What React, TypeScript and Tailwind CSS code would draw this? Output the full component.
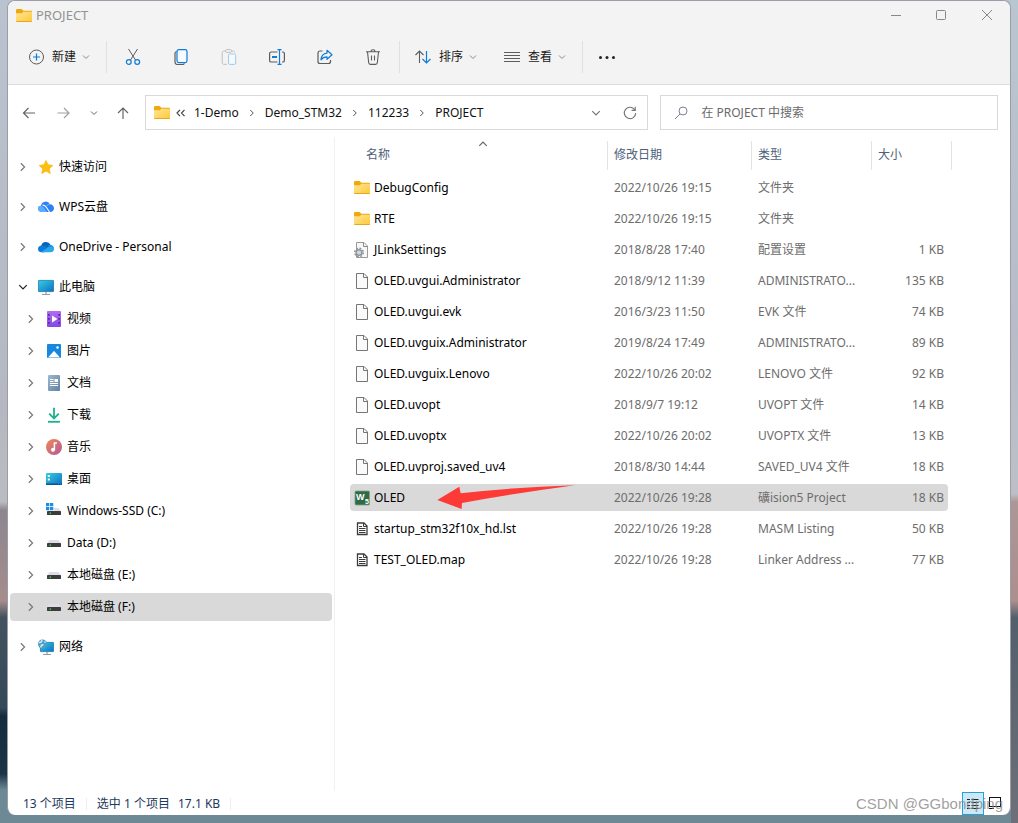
import type { ReactNode } from 'react'

type FileKind = 'folder' | 'settings' | 'blank' | 'keil' | 'text'

interface FileRow {
  name: string
  date: string
  type: string
  size: string
  kind: FileKind
}

const files: FileRow[] = [
  { name: 'DebugConfig', date: '2022/10/26 19:15', type: '文件夹', size: '', kind: 'folder' },
  { name: 'RTE', date: '2022/10/26 19:15', type: '文件夹', size: '', kind: 'folder' },
  { name: 'JLinkSettings', date: '2018/8/28 17:40', type: '配置设置', size: '1 KB', kind: 'settings' },
  { name: 'OLED.uvgui.Administrator', date: '2018/9/12 11:39', type: 'ADMINISTRATO...', size: '135 KB', kind: 'blank' },
  { name: 'OLED.uvgui.evk', date: '2016/3/23 11:50', type: 'EVK 文件', size: '74 KB', kind: 'blank' },
  { name: 'OLED.uvguix.Administrator', date: '2019/8/24 17:49', type: 'ADMINISTRATO...', size: '89 KB', kind: 'blank' },
  { name: 'OLED.uvguix.Lenovo', date: '2022/10/26 20:02', type: 'LENOVO 文件', size: '92 KB', kind: 'blank' },
  { name: 'OLED.uvopt', date: '2018/9/7 19:12', type: 'UVOPT 文件', size: '14 KB', kind: 'blank' },
  { name: 'OLED.uvoptx', date: '2022/10/26 20:02', type: 'UVOPTX 文件', size: '13 KB', kind: 'blank' },
  { name: 'OLED.uvproj.saved_uv4', date: '2018/8/30 14:44', type: 'SAVED_UV4 文件', size: '18 KB', kind: 'blank' },
  { name: 'OLED', date: '2022/10/26 19:28', type: '礦ision5 Project', size: '18 KB', kind: 'keil' },
  { name: 'startup_stm32f10x_hd.lst', date: '2022/10/26 19:28', type: 'MASM Listing', size: '50 KB', kind: 'text' },
  { name: 'TEST_OLED.map', date: '2022/10/26 19:28', type: 'Linker Address ...', size: '77 KB', kind: 'text' },
]

const selectedFile = 'OLED'

function Svg({ children, size = 16, className = '' }: { children: ReactNode; size?: number; className?: string }) {
  return (
    <svg width={size} height={size} viewBox="0 0 16 16" fill="none" className={`shrink-0 ${className}`} aria-hidden="true">
      {children}
    </svg>
  )
}

function FolderIcon() {
  return (
    <Svg>
      <defs>
        <linearGradient id="folder" x1="0" y1="0" x2="1" y2="1">
          <stop offset="0" stopColor="#ffe59a" />
          <stop offset="1" stopColor="#fdc935" />
        </linearGradient>
      </defs>
      <path d="M0 2.500c0-.8.5-1.400 1.300-1.400h4.200l2 1.700h7.200c.8 0 1.300.5 1.300 1.200v3H0z" fill="#f0a90c" />
      <path d="M0 5.200h5.800l1.500-1.400h8.200c.3 0 .5.2.5.5v8.500c0 .7-.5 1.200-1.200 1.200H1.200C.5 14 0 13.500 0 12.800z" fill="url(#folder)" />
      <path d="M.3 13.500h15.400" stroke="#e9a520" />
    </Svg>
  )
}

function BlankFileIcon() {
  return (
    <Svg>
      <path d="M2.500.5h7.500l3.500 3.500v11.500h-11z" fill="#fafafb" stroke="#767676" />
      <path d="M9.500.5v4h4" stroke="#767676" />
    </Svg>
  )
}

function SettingsFileIcon() {
  return (
    <Svg>
      <path d="M2.500.5h7.500l3.500 3.500v11.500h-11z" fill="#f7f7f7" stroke="#9a9a9a" />
      <path d="M9.500.5v4h4" stroke="#8a8a8a" />
      <circle cx="5" cy="10.500" r="4.200" stroke="#8d949b" strokeWidth="1.600" strokeDasharray="1.800 1.500" />
      <circle cx="5" cy="10.500" r="2.800" fill="#e4e9ed" stroke="#8d949b" strokeWidth="1.500" />
      <circle cx="5" cy="10.500" r="1" fill="#fff" stroke="#a4abb2" strokeWidth=".6" />
    </Svg>
  )
}

function TextFileIcon() {
  return (
    <Svg>
      <path d="M3.500 2h6.500l3 3v8.500H3.500z" fill="#fff" stroke="#3c3c3c" strokeWidth="1.300" />
      <path d="M9.500 2v3.500H13" stroke="#3c3c3c" />
      <path d="M5 5.500h3M5 7.500h6.500M5 9.500h6.500M5 11.500h6.500" stroke="#3c3c3c" />
    </Svg>
  )
}

function KeilIcon() {
  return (
    <Svg>
      <rect x="1" y="1" width="14.500" height="14" rx="1" fill="#2f6b45" stroke="#7fa18b" strokeWidth=".8" />
      <text x="2" y="10" fontSize="9" fontWeight="700" fill="#fff" fontFamily="Liberation Sans, sans-serif">W</text>
      <text x="11" y="14" fontSize="7" fontWeight="700" fill="#fff" fontFamily="Liberation Sans, sans-serif">5</text>
    </Svg>
  )
}

const fileIcons: Record<FileKind, ReactNode> = {
  folder: <FolderIcon />,
  settings: <SettingsFileIcon />,
  blank: <BlankFileIcon />,
  keil: <KeilIcon />,
  text: <TextFileIcon />,
}

function StarIcon() {
  return (
    <Svg>
      <path d="M8 1.500l2 4.300 4.800.6-3.500 3.300.9 4.800L8 12.100l-4.200 2.400.9-4.800L1.200 6.400 6 5.800z" fill="#fdc010" stroke="#fbb80e" strokeWidth=".8" strokeLinejoin="round" />
    </Svg>
  )
}

function WpsCloudIcon() {
  return (
    <Svg>
      <path d="M3 6.800A4.800 4.800 0 0 1 12 5.200 4 4 0 0 1 16 9.300C16 11.700 14.500 13 12 13H4C1.500 13 0 11.600 0 9.700 0 8 1.200 6.900 3 6.800z" fill="#2f80f6" />
      <path d="M3 6.800C1.200 6.900 0 8 0 9.700 0 11.600 1.500 13 4 13h5L5.500 8z" fill="#59adff" />
      <path d="M4.500 6.200c2-.3 3 .8 4 2.300l3 4.500" stroke="#fff" strokeWidth="1.100" />
      <path d="M8.500 7c1-1.500 2.200-1.900 3.500-1.800" stroke="#8cc5ff" strokeWidth=".8" />
    </Svg>
  )
}

function OneDriveIcon() {
  return (
    <Svg>
      <path d="M3.200 6.800a5 5 0 0 1 9.300-1L15 9 6 11z" fill="#0a64bd" />
      <path d="M3.500 6.500C1.500 6.600 0 8 0 10c0 2 1.500 3.300 3.400 3.300h3L11 8.500 6.300 7z" fill="#0e7bd6" />
      <path d="M9.500 7.200c.7-.9 1.600-1.300 2.800-1.300C14.500 5.900 16 7.600 16 9.600z" fill="#1590e2" />
      <path d="M3 13.300h9.600c2 0 3.400-1.300 3.400-3.300 0-1-.5-1.600-1-2.200L10.500 8z" fill="#29a9ec" />
    </Svg>
  )
}

function Monitor({ x = 0, y = 1, w = 16, h = 12 }: { x?: number; y?: number; w?: number; h?: number }) {
  return (
    <>
      <defs>
        <linearGradient id="screen" x1="0" y1="0" x2="1" y2="1">
          <stop offset="0" stopColor="#35cfe0" />
          <stop offset="1" stopColor="#0f6fc4" />
        </linearGradient>
      </defs>
      <rect x={x + 0.4} y={y + 0.4} width={w - 0.8} height={h - 0.8} rx=".6" fill="url(#screen)" stroke="#1576ae" strokeWidth=".8" />
      <path d={`M${x + w / 2} ${y + h}v2.500M${x + w / 2 - 4} ${y + h + 2.5}h8`} stroke="#8f9ba6" strokeWidth="1.200" />
    </>
  )
}

function NetworkIcon() {
  return (
    <Svg>
      <Monitor x={2} y={3} w={14} h={10} />
      <circle cx="4.500" cy="5" r="4.500" fill="#4d9ecb" />
      <path d="M1 3.500c1.500.3 2.600-.3 3-2.500M3 8.500c-.3-1.800.8-3 2.500-2.500" stroke="#d3ecf6" strokeWidth="1.500" />
      <path d="M6 2.500c.8.8 1.500.8 2.300.6" stroke="#a8d6ea" strokeWidth="1.200" />
    </Svg>
  )
}

function VideoIcon() {
  return (
    <Svg>
      <defs>
        <linearGradient id="video" x1="0" y1="0" x2="0" y2="1">
          <stop offset="0" stopColor="#b26bf0" />
          <stop offset="1" stopColor="#8548e6" />
        </linearGradient>
      </defs>
      <rect x="1" y="0" width="14" height="16" rx="1" fill="url(#video)" />
      <path d="M2.900 3v12M13.100 3v12" stroke="#4b2390" strokeWidth="1.500" strokeDasharray="1.700 2.300" />
      <path d="M6 4.500v7l5.500-3.500z" fill="#fff" />
    </Svg>
  )
}

function PictureIcon() {
  return (
    <Svg>
      <rect x="1" y="1" width="14" height="14" rx="1" fill="#1688df" />
      <path d="M2 14.500l5.200-5.800c.5-.5 1.100-.5 1.600 0l5.200 5.800z" fill="#fff" />
      <circle cx="11.500" cy="4.500" r="1.200" fill="#fff" />
    </Svg>
  )
}

function DocumentIcon() {
  return (
    <Svg>
      <defs>
        <linearGradient id="doc" x1="0" y1="0" x2="1" y2="1">
          <stop offset="0" stopColor="#9fb8cf" />
          <stop offset="1" stopColor="#5f82a5" />
        </linearGradient>
      </defs>
      <rect x="2" y="0" width="12" height="16" rx="1" fill="url(#doc)" />
      <path d="M4 4.500h3.500M4 6.500h3.500M4 8.500h8M4 10.500h8" stroke="#fff" />
      <rect x="8.500" y="4" width="3.500" height="3" fill="#fff" />
    </Svg>
  )
}

function DownloadIcon() {
  return (
    <Svg>
      <path d="M8 .8v10.500M3.200 6.700L8 11.500l4.800-4.800" stroke="#1cb08f" strokeWidth="1.800" />
      <path d="M2 14.800h12" stroke="#1cb08f" strokeWidth="1.800" />
    </Svg>
  )
}

function MusicIcon() {
  return (
    <Svg>
      <defs>
        <linearGradient id="music" x1="0" y1="0" x2="1" y2="1">
          <stop offset="0" stopColor="#f08a55" />
          <stop offset="1" stopColor="#b0589c" />
        </linearGradient>
      </defs>
      <circle cx="8" cy="8" r="8" fill="url(#music)" />
      <circle cx="7" cy="10.800" r="2" fill="#fff" />
      <path d="M8.400 11V4h2.500" stroke="#fff" strokeWidth="1.500" />
    </Svg>
  )
}

function DesktopIcon() {
  return (
    <Svg>
      <rect x="0" y="2" width="16" height="12" rx="1" fill="url(#screen)" />
      <path d="M2.800 4v2M2.800 7.500v2" stroke="#fff" strokeWidth="2" />
      <path d="M0 13.200h11" stroke="#0b4f86" strokeWidth="1.400" />
      <path d="M11 13.200h5" stroke="#0b4f86" strokeWidth="1.400" strokeDasharray="1 1" />
    </Svg>
  )
}

function DriveIcon({ system = false }: { system?: boolean }) {
  return (
    <Svg>
      <path d="M3.500 5h9L15 8.500H1z" fill="#dcdfe3" />
      <rect x="1" y="8" width="14" height="4" rx=".4" fill="#3c3c3c" />
      <rect x="3.500" y="9.500" width="1.500" height="1.300" fill="#3fe05a" />
      {system && (
        <>
          <rect x="0" y="0" width="8" height="8" fill="#fff" />
          <path d="M0 0h3.300v3.300H0zM4 0h3.300v3.300H4zM0 4h3.300v3.300H0zM4 4h3.300v3.300H4z" fill="#1a8fe3" />
        </>
      )}
    </Svg>
  )
}

function Chevron({ dir, size = 10, className = '' }: { dir: 'right' | 'down' | 'up'; size?: number; className?: string }) {
  const d = { right: 'M4.500 2l6 6-6 6', down: 'M2 5l6 6 6-6', up: 'M2 11l6-6 6 6' }[dir]
  return (
    <Svg size={size} className={className}>
      <path d={d} stroke="currentColor" strokeWidth="2" />
    </Svg>
  )
}

interface TreeNode {
  label: string
  icon: ReactNode
  children?: TreeNode[]
}

const tree: TreeNode[] = [
  { label: '快速访问', icon: <StarIcon /> },
  { label: 'WPS云盘', icon: <WpsCloudIcon /> },
  { label: 'OneDrive - Personal', icon: <OneDriveIcon /> },
  {
    label: '此电脑',
    icon: <Svg><Monitor /></Svg>,
    children: [
      { label: '视频', icon: <VideoIcon /> },
      { label: '图片', icon: <PictureIcon /> },
      { label: '文档', icon: <DocumentIcon /> },
      { label: '下载', icon: <DownloadIcon /> },
      { label: '音乐', icon: <MusicIcon /> },
      { label: '桌面', icon: <DesktopIcon /> },
      { label: 'Windows-SSD (C:)', icon: <DriveIcon system /> },
      { label: 'Data (D:)', icon: <DriveIcon /> },
      { label: '本地磁盘 (E:)', icon: <DriveIcon /> },
      { label: '本地磁盘 (F:)', icon: <DriveIcon /> },
    ],
  },
  { label: '网络', icon: <NetworkIcon /> },
]

function TreeItem({ node, nested = false }: { node: TreeNode; nested?: boolean }) {
  const selected = node.label === '本地磁盘 (F:)'
  return (
    <button
      type="button"
      className={`flex h-7 w-full items-center rounded-sm pr-2 text-left text-black ${nested ? 'pl-4' : 'pl-2'} ${selected ? 'bg-[#d9d9d9]' : ''}`}
    >
      <Chevron dir={node.children ? 'down' : 'right'} className={node.children ? 'text-[#222]' : 'text-[#7a7a7a]'} />
      <span className="ml-2.5 mr-[5px]">{node.icon}</span>
      <span>{node.label}</span>
    </button>
  )
}

function Sidebar() {
  return (
    <nav className="w-[327px] shrink-0 border-r border-[#f0f0f0] pl-0.5 pr-0.5 pt-4" aria-label="导航窗格">
      <ul className="flex flex-col gap-3">
        {tree.map((node) => (
          <li key={node.label}>
            <TreeItem node={node} />
            {node.children && (
              <ul className="mt-1 flex flex-col gap-1">
                {node.children.map((child) => (
                  <li key={child.label}>
                    <TreeItem node={child} nested />
                  </li>
                ))}
              </ul>
            )}
          </li>
        ))}
      </ul>
    </nav>
  )
}

function TitleBar() {
  return (
    <header className="flex h-[29px] items-center pl-2 text-[#929292]">
      <FolderIcon />
      <h1 className="ml-1 flex-1 text-[13px]">PROJECT</h1>
      <button type="button" aria-label="最小化" className="flex h-full w-[46px] items-center justify-center">
        <Svg><path d="M4 7.500h10" stroke="#888" /></Svg>
      </button>
      <button type="button" aria-label="最大化" className="flex h-full w-[46px] items-center justify-center">
        <Svg><rect x="3.500" y="2.500" width="9" height="9" rx="1" stroke="#888" /></Svg>
      </button>
      <button type="button" aria-label="关闭" className="flex h-full w-[46px] items-center justify-center">
        <Svg><path d="M3 2l10 10M13 2L3 12" stroke="#888" /></Svg>
      </button>
    </header>
  )
}

function ToolButton({ label, children }: { label: string; children: ReactNode }) {
  return (
    <button type="button" aria-label={label} className="flex h-8 w-12 items-center justify-center">
      {children}
    </button>
  )
}

function MenuButton({ label, icon }: { label: string; icon: ReactNode }) {
  return (
    <button type="button" className="flex h-8 items-center text-[#1a1a1a]">
      {icon}
      <span className="ml-2">{label}</span>
      <Chevron dir="down" size={8} className="ml-1.5 text-[#8a8a8a]" />
    </button>
  )
}

function Toolbar() {
  const gray = '#5c5c5c'
  const blue = '#0f7bd6'
  return (
    <div className="flex h-[55px] items-center border-b border-[#dedede] pl-5" role="toolbar">
      <MenuButton
        label="新建"
        icon={
          <Svg>
            <circle cx="8.500" cy="8" r="7" stroke={gray} />
            <path d="M8.500 4.500v7M5 8h7" stroke={blue} strokeWidth="1.200" />
          </Svg>
        }
      />
      <div className="ml-4 mr-0.5 h-8 w-px bg-[#e0e0e0]" />
      <ToolButton label="剪切">
        <Svg>
          <path d="M3.500 0l7 11M12.500 0l-7 11" stroke={gray} />
          <circle cx="3.800" cy="13" r="2.400" stroke={blue} strokeWidth="1.200" />
          <circle cx="12.200" cy="13" r="2.400" stroke={blue} strokeWidth="1.200" />
        </Svg>
      </ToolButton>
      <ToolButton label="复制">
        <Svg>
          <path d="M3.500 2.500c-1 .3-1.500.8-1.500 1.800V13c0 1.500 1 2.500 2.500 2.500h5c1 0 1.500-.3 2-1" stroke={gray} strokeWidth="1.200" />
          <rect x="4" y=".6" width="10" height="13" rx="1.800" fill="#f7fbff" stroke={blue} strokeWidth="1.200" />
        </Svg>
      </ToolButton>
      <ToolButton label="粘贴">
        <Svg>
          <path d="M4.500 2H2.800C1.800 2 1.200 2.600 1.200 3.500v10.200c0 1 .6 1.600 1.600 1.600H6M10.500 2h1.700c1 0 1.600.6 1.600 1.500" stroke="#c0c0c0" />
          <rect x="4.500" y=".6" width="6" height="2.800" rx="1.300" stroke="#c0c0c0" />
          <rect x="7.500" y="5" width="7.200" height="10.400" rx="1.300" fill="#f4f9fd" stroke="#9cc9ee" />
        </Svg>
      </ToolButton>
      <ToolButton label="重命名">
        <Svg>
          <path d="M8.500 3H2.200C1.200 3 .6 3.700.6 4.600v6.800c0 1 .6 1.600 1.600 1.600h6.300M13 3h.8c1 0 1.600.7 1.600 1.600v6.800c0 1-.6 1.600-1.600 1.600H13" stroke={gray} strokeWidth="1.200" />
          <path d="M3 8h5" stroke={blue} strokeWidth="1.800" />
          <path d="M8.500.6h4M8.500 15.400h4M10.500.6v14.800" stroke={blue} strokeWidth="1.200" />
        </Svg>
      </ToolButton>
      <ToolButton label="共享">
        <Svg>
          <path d="M5.500 2H3C1.800 2 1 2.800 1 4v8.500c0 1.200.8 2 2 2h8.500c1.200 0 2-.8 2-2V11" stroke={gray} strokeWidth="1.200" />
          <path d="M10 1.300l5 4.500-5 4.500V7.800c-2.800 0-4.600 1-6 3 .2-3.600 2.300-6.300 6-6.700z" stroke={blue} strokeWidth="1.200" strokeLinejoin="round" />
        </Svg>
      </ToolButton>
      <ToolButton label="删除">
        <Svg>
          <path d="M1 2.800h14M6 2.600C6 1.300 6.800.7 8 .7s2 .6 2 1.900M2.500 3l1.200 10.800c.1 1 .8 1.600 1.700 1.600h5.200c.9 0 1.600-.6 1.700-1.600L13.500 3M6.500 6.500v5M9.500 6.500v5" stroke={gray} strokeWidth="1.100" />
        </Svg>
      </ToolButton>
      <div className="ml-0.5 mr-[15px] h-8 w-px bg-[#e0e0e0]" />
      <MenuButton
        label="排序"
        icon={
          <Svg>
            <path d="M4.500 14V2M.5 6l4-4 4 4" stroke={gray} strokeWidth="1.100" />
            <path d="M11.500 2v12M7.500 10l4 4 4-4" stroke={blue} strokeWidth="1.200" />
          </Svg>
        }
      />
      <div className="w-[27px]" />
      <MenuButton
        label="查看"
        icon={
          <Svg>
            <path d="M0 3.500h16M0 6.500h16M0 9.500h16M0 12.500h16" stroke={gray} />
          </Svg>
        }
      />
      <div className="ml-4 h-8 w-px bg-[#e0e0e0]" />
      <ToolButton label="更多">
        <Svg>
          <circle cx="1.500" cy="8.500" r="1.500" fill="#222" />
          <circle cx="8" cy="8.500" r="1.500" fill="#222" />
          <circle cx="14.500" cy="8.500" r="1.500" fill="#222" />
        </Svg>
      </ToolButton>
    </div>
  )
}

function AddressRow() {
  const crumbs = ['1-Demo', 'Demo_STM32', '112233', 'PROJECT']
  return (
    <div className="flex items-center pb-[7px] pl-3 pr-3 pt-2.5">
      <button type="button" aria-label="后退" className="mr-5">
        <Svg><path d="M3.500 8H15M8.500 3l-5 5 5 5" stroke="#666" strokeWidth="1.200" /></Svg>
      </button>
      <button type="button" aria-label="前进" className="mr-[18px]">
        <Svg><path d="M1.500 8H13M8 3l5 5-5 5" stroke="#a0a0a0" strokeWidth="1.200" /></Svg>
      </button>
      <button type="button" aria-label="最近的位置" className="mr-[17px]">
        <Chevron dir="down" size={8} className="text-[#666]" />
      </button>
      <button type="button" aria-label="向上" className="mr-3.5">
        <Svg><path d="M8 14V3M3 8l5-5 5 5" stroke="#666" strokeWidth="1.200" /></Svg>
      </button>
      <div className="flex h-[35px] flex-3 items-center border border-[#d9d9d9] px-2 text-[#111]">
        <FolderIcon />
        <svg width="10" height="8" viewBox="0 0 10 8" fill="none" className="ml-1.5 mr-2 shrink-0" aria-hidden="true">
          <path d="M4 .8L1 4l3 3.200M8.500.8L5.500 4l3 3.200" stroke="#444" strokeWidth="1.200" />
        </svg>
        {crumbs.map((crumb, i) => (
          <div key={crumb} className="flex items-center">
            {i > 0 && <Chevron dir="right" size={8} className="mx-[9px] text-[#555]" />}
            <a href="#">{crumb}</a>
          </div>
        ))}
        <button type="button" aria-label="以前的位置" className="ml-auto mr-[22px]">
          <Chevron dir="down" className="text-[#777]" />
        </button>
        <button type="button" aria-label="刷新" className="mr-0.5">
          <Svg size={14}>
            <path d="M13.500 4.500A6.500 6.500 0 1 0 14.500 8M14 .8v4.200H9.800" stroke="#777" strokeWidth="1.300" />
          </Svg>
        </button>
      </div>
      <label className="ml-3 flex h-[35px] flex-2 items-center border border-[#d9d9d9] pl-3">
        <Svg>
          <circle cx="10" cy="6" r="4" stroke="#808090" />
          <path d="M7 9l-5 5" stroke="#808090" />
        </Svg>
        <input
          type="search"
          aria-label="搜索"
          placeholder="在 PROJECT 中搜索"
          className="ml-3 min-w-0 flex-1 bg-transparent outline-none placeholder:text-[#6a6a6a]"
        />
      </label>
    </div>
  )
}

function FileTable() {
  const th = 'border-l border-[#e3e3e3] p-0 pb-0.5 pl-1.5 text-left font-normal'
  return (
    <table className="w-[602px] table-fixed border-separate border-spacing-x-0 border-spacing-y-1">
      <colgroup>
        <col className="w-[257px]" />
        <col className="w-[144px]" />
        <col className="w-[120px]" />
        <col className="w-[77px]" />
        <col className="w-1" />
      </colgroup>
      <thead>
        <tr className="h-[29px] text-[#4c607a]">
          <th className="relative p-0 pb-0.5 pl-4 text-left font-normal">
            名称
            <span className="absolute -top-0.5 left-32">
              <Chevron dir="up" className="text-[#666]" />
            </span>
          </th>
          <th className={th}>修改日期</th>
          <th className={th}>类型</th>
          <th className={th}>大小</th>
          <td className="border-r border-[#e3e3e3] p-0" />
        </tr>
      </thead>
      <tbody>
        {files.map((file) => {
          const selected = file.name === selectedFile
          const bg = selected ? 'bg-[#d9d9d9]' : ''
          return (
            <tr key={file.name} className="h-[27px] whitespace-nowrap text-[#6d6d6d]">
              <td className={`relative rounded-l-sm p-0 pl-1 ${bg}`}>
                <div className="flex items-center gap-1 text-black">
                  {fileIcons[file.kind]}
                  <span>{file.name}</span>
                </div>
                {selected && <PointerArrow />}
              </td>
              <td className={`p-0 pl-[7px] ${bg}`}>{file.date}</td>
              <td className={`p-0 pl-[7px] ${bg}`}>{file.type}</td>
              <td className={`rounded-r-sm p-0 pr-1 text-right ${bg}`}>{file.size}</td>
              <td className="p-0" />
            </tr>
          )
        })}
      </tbody>
    </table>
  )
}

// Red annotation arrow pointing at the selected file
function PointerArrow() {
  return (
    <svg width="140" height="26" viewBox="0 0 140 26" className="absolute left-[87px] top-0" aria-hidden="true">
      <path d="M.3 16L22.300 2.700l1.400 6.600Q80 3 138 1.300 80 9 25 19l-.4 6z" fill="#fd3a36" />
    </svg>
  )
}

function StatusBar() {
  return (
    <footer className="relative flex h-6 items-center pl-[15px] pt-px text-[#1e395b]">
      <span>13 个项目</span>
      <div className="mx-2.5 h-3 w-px bg-[#ededed]" />
      <span>选中 1 个项目</span>
      <span className="ml-2">17.1 KB</span>
      <div className="ml-2.5 h-3 w-px bg-[#ededed]" />
      <button type="button" aria-label="详细信息" className="ml-auto flex h-[23px] w-[22px] items-center justify-center border border-[#26a0da] bg-[#cce8f7]">
        <Svg>
          <path d="M2 3.500h3M6.500 3.500h7M2 6.500h3M6.500 6.500h7M2 9.500h3M6.500 9.500h7M2 12.500h3M6.500 12.500h7" stroke="#222" />
        </Svg>
      </button>
      <button type="button" aria-label="大图标" className="ml-[3px] mr-[7px]">
        <Svg>
          <rect x="2.500" y="1.500" width="11" height="9" stroke="#111" />
          <path d="M2 12.500h5" stroke="#111" />
        </Svg>
      </button>
      <span className="pointer-events-none absolute -bottom-px right-[7px] font-['Liberation_Sans',sans-serif] text-[15px] leading-6 text-[#888]/80">
        CSDN @GGbondping
      </span>
    </footer>
  )
}

export default function App() {
  return (
    <div className="flex min-h-screen bg-[linear-gradient(180deg,#b9c3cf_0%,#b5b8c0_50%,#b9bcc1_61%,#8c8690_62%,#a58d8c_73%,#44525f_75%,#34495a_86%,#142c3e_87%,#1b3446_94%,#6d8995_96%,#6d8995_100%)] font-['Noto_Sans','Noto_Sans_CJK_SC',sans-serif] text-xs">
      <div className="flex min-w-0 flex-1 flex-col pb-2 pl-[7px]">
        <div className="flex flex-1 flex-col overflow-hidden rounded-lg border-x border-t border-[#9b9ca8] bg-white">
          <div className="bg-[#f3f3f3]">
            <TitleBar />
            <Toolbar />
          </div>
          <AddressRow />
          <main className="flex flex-1">
            <Sidebar />
            <div className="flex-1 overflow-x-auto pl-[15px]">
              <FileTable />
            </div>
          </main>
          <StatusBar />
        </div>
      </div>
      <div className="w-[7px] shrink-0 bg-[linear-gradient(180deg,#b8c6d0_0%,#b8bcc8_40%,#bcc0c6_60%,#ab9795_61%,#ab8f8d_73%,#52606c_75%,#6e7079_100%)]" />
    </div>
  )
}
